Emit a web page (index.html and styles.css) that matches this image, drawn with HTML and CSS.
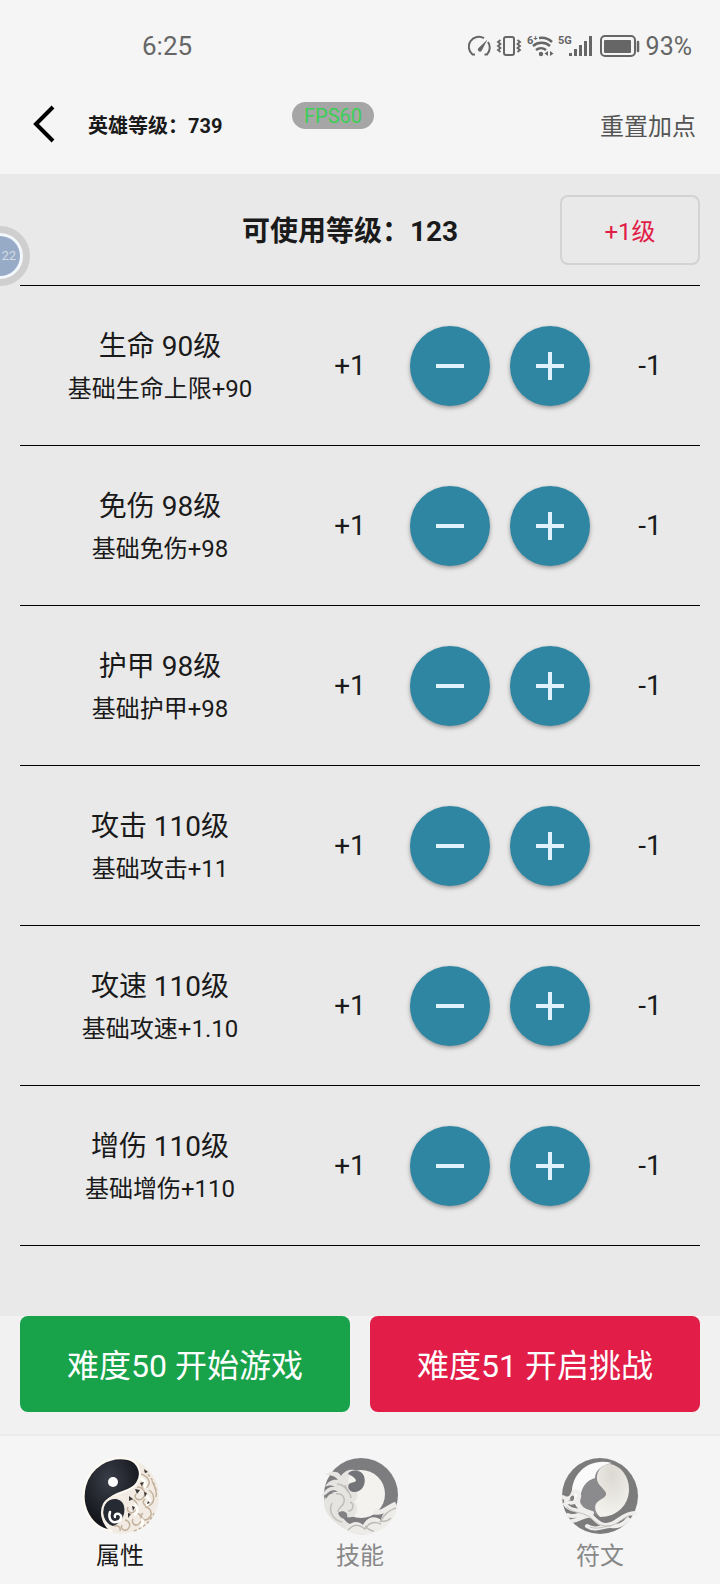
FILE: index.html
```html
<!DOCTYPE html>
<html lang="zh-CN">
<head>
  <meta charset="UTF-8">
  <meta name="viewport" content="width=device-width, initial-scale=1">
  <title>英雄属性</title>
  <link rel="stylesheet" href="styles.css">
</head>
<body>

  <!-- Status bar -->
  <div class="status-bar">
    <span class="time">6:25</span>
    <div class="status-icons">
      <svg width="24" height="24" viewBox="0 0 24 24" fill="none" stroke="currentColor" stroke-width="2">
        <path d="M7 20.500H4.500A10 10 0 0 1 16 4.200M20 8a10 10 0 0 1-1 12.500h-2.500"/>
        <path d="M19.500 5.500l-9 8.500a2 2 0 0 0 3 3z" fill="currentColor" stroke="none"/>
      </svg>
      <svg width="26" height="24" viewBox="0 0 26 24" fill="none" stroke="currentColor" stroke-width="2">
        <rect x="8" y="3" width="10" height="18" rx="2"/>
        <path d="M4.500 6L2 8l2.500 2L2 12l2.500 2L2 16l2.500 2M21.500 6L24 8l-2.500 2 2.500 2-2.500 2 2.500 2-2.500 2" stroke-width="1.800"/>
      </svg>
      <svg width="28" height="24" viewBox="0 0 28 24" fill="none" stroke="currentColor" stroke-width="2.500">
        <path d="M13 4a15 15 0 0 1 13 4M7 12a13 13 0 0 1 17 0M10 16a8 8 0 0 1 10 0"/>
        <circle cx="15" cy="20" r="2.200" fill="currentColor" stroke="none"/>
        <path d="M22 17v5l-3.500-2.500zM24 17v5l3.500-2.500z" fill="currentColor" stroke="none"/>
        <text class="tiny-label" x="1" y="10">6⁺</text>
      </svg>
      <svg width="34" height="24" viewBox="0 0 34 24" fill="currentColor">
        <text class="tiny-label" x="0" y="10">5G</text>
        <path d="M11 19h3v3h-3zM16 15h3v7h-3zM21 11h3v11h-3zM26 7h3v15h-3zM31 2h3v20h-3z"/>
      </svg>
      <svg class="icon-battery" width="40" height="24" viewBox="0 0 40 24" fill="none" stroke="currentColor">
        <rect x="1" y="2" width="34" height="20" rx="4" stroke-width="2"/>
        <rect x="4" y="6" width="27" height="13" rx="1" fill="currentColor" stroke="none"/>
        <path d="M38 8v9" stroke-width="2.500" stroke-linecap="round"/>
      </svg>
      <span class="battery-text">93%</span>
    </div>
  </div>

  <!-- Header -->
  <header class="header">
    <button class="back" aria-label="返回">
      <svg width="24" height="40" viewBox="0 0 24 40" fill="none" stroke="#000" stroke-width="4">
        <path d="M21 3L4 20l17 17"/>
      </svg>
    </button>
    <h1 class="hero-level">英雄等级：739</h1>
    <button class="reset">重置加点</button>
  </header>

  <main class="content">
    <div class="points">
      <h2 class="points-left">可使用等级：123</h2>
      <button class="add-level">+1级</button>
    </div>

    <ul class="stats" id="stats"></ul>
  </main>

  <div class="actions">
    <button class="start">难度50 开始游戏</button>
    <button class="challenge">难度51 开启挑战</button>
  </div>

  <!-- Tab bar -->
  <nav class="tabs">
    <a class="tab active" href="#attr">
      <svg width="80" height="80" viewBox="0 0 80 80">
        <defs>
          <radialGradient id="ink" cx="45%" cy="30%" r="60%">
            <stop offset="0" stop-color="#3a3e48"/>
            <stop offset="1" stop-color="#14161c"/>
          </radialGradient>
        </defs>
        <circle cx="41" cy="40" r="38" fill="#f1ebe3"/>
        <g fill="none" stroke="#c3b19c" stroke-width="1.500">
          <path d="M61 18c7 2 10 8 7 12s-9 0-6-4M69 34c6 4 6 12 1 15s-9-3-5-6M57 31c7 0 10 7 6 11s-10 0-7-4M65 51c7 1 8 9 3 12s-9-3-5-6M51 43c6 1 8 8 4 12s-9 0-7-4M57 57c5 2 6 8 2 11s-8-1-6-5M45 64c5 1 6 6 3 9s-8 0-6-4M34 70c4-1 7 1 6 5M72 25c3 6 5 10 4 16"/>
          <path d="M64 15c6 4 11 12 12 20M54 75c9-3 17-10 20-18" stroke-dasharray="3 2"/>
        </g>
        <g fill="none" stroke="#fffdf8" stroke-width="3">
          <path d="M60 22c5 2 7 7 4 10M66 40c5 3 4 8 0 9M54 48c5 4 4 9 0 11M61 63c3 2 2 6-1 7"/>
        </g>
        <path d="M64 13l4 3-3 1zM60 27l4-1-2 4zM55 33l5 1-3 4zM64 36l3 1-2 4zM49 40l4 3-4 2zM52 50l3 1-2 4zM48 57l3 1-3 4zM68 45l2 2-3 1z" fill="#3b3734"/>
        <path d="M31 75C10 71 0 50 5 30 10 11 29-1 48 3c11 3 15 15 9 24-5 8-15 8-24 13-12 7-12 22-2 35z" fill="url(#ink)" stroke="#fffaf2" stroke-width="2"/>
        <path d="M27 46c5-5 15-4 17 4 2 9-3 17-11 20-10-3-13-17-6-24z" fill="#262a32"/>
        <path d="M45 42c-8-3-17-1-21 6-4 8-2 18 6 26" fill="none" stroke="#f6f0e7" stroke-width="2"/>
        <path d="M30 56c-2 6 1 11 6 10 5 0 7-6 3-8-3-1-5 1-4 3" fill="none" stroke="#fff" stroke-width="2.500" stroke-linecap="round"/>
        <circle cx="33" cy="26" r="5" fill="#fff"/>
      </svg>
      <span>属性</span>
    </a>
    <a class="tab" href="#skill">
      <svg width="80" height="80" viewBox="0 0 80 80">
        <circle cx="41" cy="39" r="37" fill="#7d7d80"/>
        <circle cx="41" cy="38" r="24" fill="#f3f2ef"/>
        <path d="M5 19c7-5 14-4 16 1 5-7 12-7 16-5-6 1-10 6-8 12 1 4 6 5 8 9 2 5-1 8-3 10 4 4 4 10 0 14-5 3-11 1-10-4-3 4 0 10 8 13 7 3 13 8 16 9-8 2-17-1-23-5C14 67 4 57 4 47c0-6 4-9 10-10-5-2-9 2-12 4 2-6 6-11 13-10-3-2-7-2-10 0 3-6 8-8 13-7-4-5-8-5-13-5z" fill="#e6e4e1"/>
        <g fill="none" stroke="#c0bebb" stroke-width="1.500">
          <path d="M17 28c6 0 9 4 11 8M16 38c6-1 9 3 8 8s-6 5-6 10M25 29c2 6 6 8 6 13M12 47c-4 8 1 17 10 19M30 46c5 2 3 9-2 9"/>
        </g>
        <path d="M6 39c3-5 9-6 12-3-5-1-9 2-12 7zM18 57c4-4 11-1 9 4-2 3-7 2-9-4z" fill="#828284"/>
        <path d="M28 18c2-5 13-5 16 2 3 9-3 17-11 16-4-1-6-5-4-8 2-2 5-1 7-3 0-3-4-5-8-7z" fill="#737477"/>
        <path d="M26 73c4-8 12-9 17-4 4-8 12-10 18-5 1-7 7-13 16-14-1 14-14 26-29 28-8 0-16-1-22-5z" fill="#eeece9"/>
        <path d="M28 74c7-7 12-5 17-1 4-7 9-8 16-5M45 70c3 3 5 5 9 5M60 66c5-9 11-13 16-14M61 65c5 1 8-1 10-3" fill="none" stroke="#bdbbb8" stroke-width="1.500"/>
        <path d="M54 56c9 2 14-5 22-8" fill="none" stroke="#eeece9" stroke-width="5"/>
      </svg>
      <span>技能</span>
    </a>
    <a class="tab" href="#rune">
      <svg width="80" height="80" viewBox="0 0 80 80">
        <defs>
          <radialGradient id="pearl" cx="50%" cy="20%" r="75%">
            <stop offset="0" stop-color="#dbd8d2"/>
            <stop offset="1" stop-color="#f3f1ec"/>
          </radialGradient>
        </defs>
        <circle cx="40" cy="40" r="38" fill="#7c7c7c"/>
        <circle cx="42" cy="34" r="26" fill="#8b8b8e"/>
        <path d="M52 7C30 1 11 17 12 38c1 9 5 14 10 18-5-17 1-31 13-34 0-7 6-13 17-15z" fill="#fbfafa"/>
        <path d="M50 8c11 2 19 12 19 25 0 16-12 28-29 28-6-6-7-13 0-17 6-3 8-6 4-10-3-4-8-7-7-14 1-7 6-12 13-12z" fill="url(#pearl)"/>
        <g fill="none" stroke="#efeeec" stroke-linecap="round">
          <path d="M3 41c4 3 9 1 10-4 2-4 7-1 6 4-1 6-9 7-13 4M5 48c4 7 13 6 20 8 9 3 10 12 20 13 12 1 16-12 30-12" stroke-width="4"/>
          <path d="M8 59c8 4 13-3 18-2M12 65c9-1 13-7 19-5M27 70c9 6 18-1 24 0 7 1 13-2 17-7M17 43c1 8 6 12 15 14" stroke-width="4"/>
        </g>
        <path d="M7 51c6 6 13 5 19 8 8 4 10 10 19 11 11 1 16-8 26-11M30 71c8 3 14-1 21-1" fill="none" stroke="#c2c0bd" stroke-width="1"/>
        <path d="M10 42c2-4 5-3 4 1-1 2-3 3-4-1z" fill="#7e7e7e"/>
      </svg>
      <span>符文</span>
    </a>
  </nav>

  <!-- Floating overlays -->
  <div class="fps">FPS60</div>
  <div class="bubble"><span>22</span></div>

  <script>
    const stats = [
      { name: "生命", level: 90, desc: "基础生命上限+90" },
      { name: "免伤", level: 98, desc: "基础免伤+98" },
      { name: "护甲", level: 98, desc: "基础护甲+98" },
      { name: "攻击", level: 110, desc: "基础攻击+11" },
      { name: "攻速", level: 110, desc: "基础攻速+1.10" },
      { name: "增伤", level: 110, desc: "基础增伤+110" }
    ];

    document.getElementById('stats').innerHTML = stats.map(s => `
      <li class="stat">
        <div class="stat-info">
          <div class="stat-name">${s.name} ${s.level}级</div>
          <div class="stat-desc">${s.desc}</div>
        </div>
        <span class="delta">+1</span>
        <button class="round" aria-label="${s.name}减少">
          <svg width="28" height="28" viewBox="0 0 28 28"><path d="M0 12h28v4H0z"/></svg>
        </button>
        <button class="round" aria-label="${s.name}增加">
          <svg width="28" height="28" viewBox="0 0 28 28"><path d="M0 12h12V0h4v12h12v4H16v12h-4V16H0z"/></svg>
        </button>
        <span class="delta">-1</span>
      </li>
    `).join('');
  </script>
</body>
</html>
```

FILE: styles.css
```css
* {
  box-sizing: border-box;
}

body {
  margin: 0;
  min-height: 100vh;
  display: flex;
  flex-direction: column;
  position: relative;
  font-family: Roboto, "Noto Sans CJK SC", sans-serif;
  color: #1a1a1a;
  background: #f5f5f5;
}

button {
  font-family: inherit;
  padding: 0;
  border: none;
  background: none;
  cursor: pointer;
}

svg {
  display: block;
}

h1, h2 {
  margin: 0;
}

/* status bar */
.status-bar {
  display: flex;
  justify-content: space-between;
  align-items: center;
  height: 76px;
  padding: 16px 28px 0 142px;
  color: #666;
}

.time {
  font-size: 26px;
}

.status-icons {
  display: flex;
  align-items: center;
  gap: 4px;
}

.icon-battery {
  margin: 0 2px 0 4px;
}

.tiny-label {
  font-size: 11px;
  font-weight: bold;
  fill: #666;
  stroke: none;
}

.battery-text {
  font-size: 25px;
}

/* header */
.header {
  display: flex;
  align-items: center;
  height: 98px;
  padding: 0 24px 2px 32px;
}

.back {
  margin-right: 32px;
}

.hero-level {
  flex: 1;
  font-size: 20px;
  font-weight: bold;
}

.reset {
  font-size: 24px;
  color: #555;
}

/* content */
.content {
  flex: 1;
  padding: 0 20px;
  background: #e9e9e9;
}

.points {
  display: grid;
  grid-template-columns: 120px 1fr 140px;
  align-items: center;
  height: 112px;
  border-bottom: 1px solid #000;
}

.points-left {
  grid-column: 2;
  padding-bottom: 2px;
  text-align: center;
  font-size: 28px;
  font-weight: bold;
}

.add-level {
  height: 70px;
  border: 2px solid #d3d3d3;
  border-radius: 8px;
  font-size: 24px;
  color: #e11d48;
}

.stats {
  margin: 0;
  padding: 0;
  list-style: none;
}

.stat {
  display: grid;
  grid-template-columns: 1fr repeat(4, 100px);
  align-items: center;
  justify-items: center;
  height: 160px;
  border-bottom: 1px solid #000;
}

.stat-info {
  padding-top: 2px;
  text-align: center;
}

.stat-name {
  font-size: 28px;
  line-height: 44px;
}

.stat-desc {
  font-size: 24px;
  line-height: 40px;
}

.delta {
  font-size: 28px;
}

.round {
  display: flex;
  align-items: center;
  justify-content: center;
  width: 80px;
  height: 80px;
  border-radius: 50%;
  background: #2e86a3;
  fill: #e0f2fe;
  box-shadow: 0 2px 4px rgba(0, 0, 0, 0.35);
}

/* bottom buttons */
.actions {
  display: grid;
  grid-template-columns: 1fr 1fr;
  gap: 20px;
  padding: 0 20px 22px;
  background: #f1f1f1;
}

.actions button {
  height: 96px;
  padding-bottom: 3px;
  border-radius: 8px;
  font-size: 32px;
  color: #fff;
}

.actions .start {
  background: #18a34b;
}

.actions .challenge {
  background: #e11d48;
}

/* tab bar */
.tabs {
  display: grid;
  grid-template-columns: repeat(3, 1fr);
  height: 150px;
  padding-top: 20px;
  border-top: 2px solid #ebebeb;
}

.tab {
  display: flex;
  flex-direction: column;
  align-items: center;
  font-size: 24px;
  line-height: 40px;
  color: #888;
  text-decoration: none;
}

.tab.active {
  color: #1a1a1a;
}

/* floating overlays */
.fps {
  position: absolute;
  top: 102px;
  left: 292px;
  padding: 1px 12px 0;
  border-radius: 14px;
  font-size: 20px;
  line-height: 26px;
  color: #3ccf55;
  background: #a6a6a6;
}

.bubble {
  position: absolute;
  top: 226px;
  left: -30px;
  width: 60px;
  height: 60px;
  border: 7px solid #cfcfcf;
  border-radius: 50%;
  background: #f3f8fd;
  padding: 3px;
}

.bubble span {
  display: block;
  height: 40px;
  border-radius: 50%;
  padding-right: 4px;
  font-size: 13px;
  line-height: 40px;
  text-align: right;
  color: #d3dbe6;
  background: #97abc6;
}
```
